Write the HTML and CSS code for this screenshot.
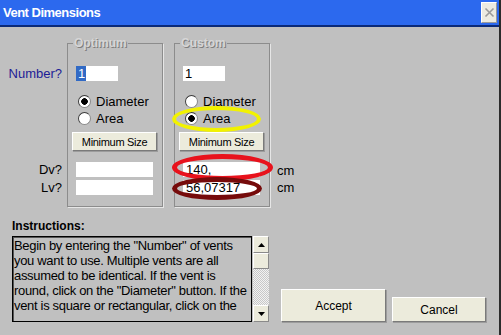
FILE: index.html
```html
<!DOCTYPE html>
<html lang="en">
<head>
  <meta charset="UTF-8">
  <title>Vent Dimensions</title>
  <link rel="stylesheet" href="styles.css">
</head>
<body>
  <div class="window">
    <header class="titlebar">
      <span class="title">Vent Dimensions</span>
      <span class="close">
        <svg width="11" height="11" viewBox="0 0 11 11"><path d="M1.5 1.5 L9.5 9.5 M9.5 1.5 L1.5 9.5" stroke="#9a9a9a" stroke-width="1.6"/></svg>
      </span>
    </header>

    <main class="content">
      <div class="top">
        <div class="labels">
          <div class="lbl lbl-num">Number?</div>
          <div class="lbl lbl-dv">Dv?</div>
          <div class="lbl lbl-lv">Lv?</div>
        </div>

        <fieldset class="group">
          <legend>Optimum</legend>
          <div class="field num"><span class="sel">1</span></div>
          <div class="radios">
            <div class="radio"><span class="dot on"></span>Diameter</div>
            <div class="radio"><span class="dot"></span>Area</div>
          </div>
          <button class="btn minsize">Minimum Size</button>
          <div class="field dim"></div>
          <div class="field dim lv"></div>
        </fieldset>

        <fieldset class="group custom">
          <legend>Custom</legend>
          <div class="field num">1</div>
          <div class="radios">
            <div class="radio"><span class="dot"></span>Diameter</div>
            <div class="radio"><span class="dot on"></span>Area</div>
          </div>
          <button class="btn minsize">Minimum Size</button>
          <div class="field dim">140,</div>
          <div class="field dim lv">56,07317</div>
        </fieldset>

        <div class="units">
          <div class="unit">cm</div>
          <div class="unit lv">cm</div>
        </div>
      </div>

      <div class="bottom">
        <div class="instructions">
          <div class="inst-title">Instructions:</div>
          <div class="inst-box">
            <div class="textbox">
              <div class="textclip">Begin by entering the "Number" of vents<br>you want to use. Multiple vents are all<br>assumed to be identical. If the vent is<br>round, click on the "Diameter" button. If the<br>vent is square or rectangular, click on the</div>
            </div>
            <div class="scrollbar">
              <span class="sb-btn"><svg width="7" height="4" viewBox="0 0 7 4"><polygon points="3.5,0 7,4 0,4" fill="#000"/></svg></span>
              <span class="sb-thumb"></span>
              <span class="sb-track"></span>
              <span class="sb-btn"><svg width="7" height="4" viewBox="0 0 7 4"><polygon points="0,0 7,0 3.5,4" fill="#000"/></svg></span>
            </div>
          </div>
        </div>
        <button class="btn accept">Accept</button>
        <button class="btn cancel">Cancel</button>
      </div>
    </main>

    <!-- hand-drawn highlight rings -->
    <div class="ring ring-yellow"></div>
    <div class="ring ring-red"></div>
    <div class="ring ring-dark"></div>
  </div>
</body>
</html>
```

FILE: styles.css
```css
body {
  margin: 0;
  font-family: "Liberation Sans", Arial, sans-serif;
  font-size: 13px;
  color: #000;
  background: #c0c0c0;
}
.window {
  position: relative;
  width: 501px;
  height: 335px;
  box-sizing: border-box;
  border-right: 2px solid #2b2b2b;
  background: #c0c0c0;
  overflow: hidden;
}
.titlebar {
  display: flex;
  justify-content: space-between;
  align-items: center;
  height: 25px;
  padding: 0 2px 0 3px;
  background: #2c69ee;
  border-bottom: 2px solid #0b2a78;
}
.title {
  color: #fff;
  font-weight: bold;
  letter-spacing: -0.5px;
}
.close {
  display: flex;
  align-items: center;
  justify-content: center;
  width: 14px;
  height: 19px;
  background: #ecebe2;
  border: 1px solid #fff;
  border-right-color: #9a9a9a;
  border-bottom-color: #9a9a9a;
}

.top {
  display: flex;
  align-items: flex-start;
  margin-top: 9px;
}
.labels {
  display: flex;
  flex-direction: column;
  width: 67px;
  padding-right: 5px;
  box-sizing: border-box;
  text-align: right;
}
.lbl {
  height: 15px;
  line-height: 15px;
}
.lbl-num {
  margin-top: 30px;
  color: #1c1c96;
}
.lbl-dv {
  margin-top: 81px;
}
.lbl-lv {
  margin-top: 3px;
}

.group {
  width: 96px;
  box-sizing: border-box;
  margin: 0;
  padding: 0 0 11px;
  min-inline-size: 0;
  border: 1px solid #8c8c8c;
  box-shadow: 1px 1px 0 #e6e6e6;
}
.group.custom {
  margin-left: 11px;
}
.group legend {
  margin-left: 5px;
  padding: 0 1px;
  line-height: 14px;
  font-size: 12px;
  font-weight: bold;
  color: #d6d6d6;
  text-shadow: 1px 1px 0 #7e7e7e;
}
.field {
  height: 15px;
  line-height: 15px;
  margin-left: 8px;
  padding-left: 2px;
  box-sizing: border-box;
  background: #fff;
  white-space: nowrap;
}
.field.num {
  width: 42px;
  margin-top: 16px;
}
.group:not(.custom) .field.num {
  padding-left: 0;
}
.sel {
  display: inline-block;
  height: 15px;
  padding: 0 1px 0 2px;
  background: #316ac5;
  color: #fff;
}
.field.dim {
  width: 77px;
  margin-top: 11px;
  padding-left: 3px;
}
.field.dim.lv {
  margin-top: 3px;
}
.radios {
  margin-top: 12px;
  margin-left: 10px;
}
.radio {
  display: flex;
  align-items: center;
  gap: 5px;
  height: 17px;
}
.dot {
  width: 13px;
  height: 13px;
  box-sizing: border-box;
  border-radius: 50%;
  border: 1px solid #3a3a3a;
  border-right-color: #8a8a8a;
  border-bottom-color: #8a8a8a;
  background: #fff;
}
.dot.on {
  background: radial-gradient(circle, #000 0 3px, #fff 3.6px);
}

.btn {
  margin: 0;
  padding: 0;
  font-family: inherit;
  font-size: 12px;
  color: #000;
  background: #ecebdc;
  border: 1px solid #fff;
  border-right-color: #7a7a7a;
  border-bottom-color: #7a7a7a;
  box-shadow: 1px 1px 0 #9c9c9c;
}
.btn.minsize {
  display: block;
  width: 85px;
  height: 19px;
  margin: 5px 0 0 4px;
  font-size: 11px;
  letter-spacing: -0.3px;
}

.units {
  margin-left: 7px;
}
.unit {
  margin-top: 127px;
  height: 15px;
  line-height: 15px;
}
.unit.lv {
  margin-top: 2px;
}

.bottom {
  display: flex;
  align-items: flex-end;
  margin-top: 12px;
}
.instructions {
  margin-left: 12px;
}
.inst-title {
  font-size: 12px;
  font-weight: bold;
  line-height: 15px;
}
.inst-box {
  display: flex;
  margin-top: 2px;
}
.textbox {
  width: 240px;
  height: 86px;
  box-sizing: border-box;
  padding: 1px 0 0 1px;
  border: 1px solid #000;
  box-shadow: inset 1px 1px 0 #555;
  overflow: hidden;
}
.textclip {
  line-height: 15px;
  letter-spacing: -0.32px;
  white-space: nowrap;
}
.scrollbar {
  display: flex;
  flex-direction: column;
  width: 16px;
  height: 86px;
  margin-left: 1px;
}
.sb-btn,
.sb-thumb {
  display: flex;
  align-items: center;
  justify-content: center;
  height: 17px;
  box-sizing: border-box;
  background: #ecebdc;
  border: 1px solid #fff;
  border-right-color: #8a8a8a;
  border-bottom-color: #8a8a8a;
}
.sb-thumb {
  height: 16px;
}
.sb-track {
  flex: 1;
  background: repeating-conic-gradient(#f2f2f2 0 25%, #c8c8c8 0 50%) 0 0 / 2px 2px;
}
.btn.accept {
  width: 105px;
  height: 33px;
  margin-left: 12px;
}
.btn.cancel {
  width: 94px;
  height: 25px;
  margin-left: 6px;
}

.ring {
  position: absolute;
  box-sizing: border-box;
  border-radius: 50%;
}
.ring-yellow {
  left: 172px;
  top: 106px;
  width: 89px;
  height: 26px;
  border: 4px solid #f2f200;
}
.ring-red {
  left: 172px;
  top: 154px;
  width: 101px;
  height: 27px;
  border: 5px solid #e8121c;
}
.ring-dark {
  left: 172px;
  top: 177px;
  width: 90px;
  height: 23px;
  border: 5px solid #760b0b;
}
```
